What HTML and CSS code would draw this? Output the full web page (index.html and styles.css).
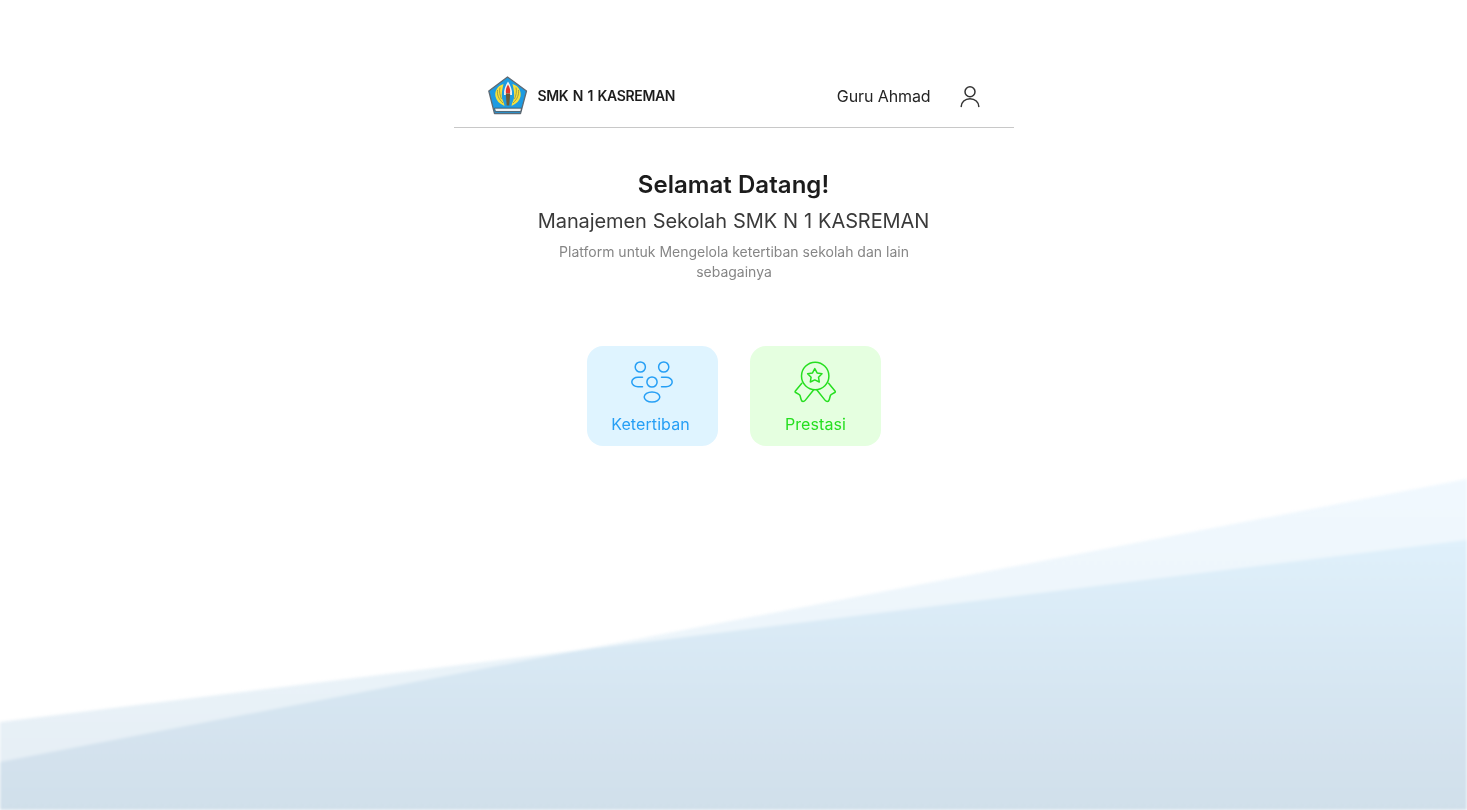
FILE: index.html
```html
<!DOCTYPE html>
<html lang="id">
<head>
<meta charset="utf-8">
<title>SMK N 1 KASREMAN</title>
<link rel="stylesheet" href="styles.css">
</head>
<body>
<svg class="backdrop" viewBox="0 0 1467 810" preserveAspectRatio="none" aria-hidden="true">
  <defs>
    <linearGradient id="waveA" gradientUnits="userSpaceOnUse" x1="0" y1="540" x2="0" y2="810">
      <stop offset="0" stop-color="#eef8fd"/>
      <stop offset="1" stop-color="#e4ecf3"/>
    </linearGradient>
    <linearGradient id="waveB" gradientUnits="userSpaceOnUse" x1="0" y1="479" x2="0" y2="810">
      <stop offset="0" stop-color="#f0f8fe"/>
      <stop offset="1" stop-color="#e9f1f6"/>
    </linearGradient>
  </defs>
  <polygon class="wave" points="0,762 1467,479 1467,810 0,810" fill="url(#waveB)"/>
  <polygon class="wave" points="0,722 1467,540 1467,810 0,810" fill="url(#waveA)"/>
</svg>

<main class="panel">
  <header class="topbar">
    <div class="brand">
      <svg class="logo" viewBox="0 0 40 40" aria-hidden="true">
        <path d="M19.500 1 38.500 15 32.500 37.500 6.500 37.500 .8 15Z" fill="#1d9be2" stroke="#5f6a74" stroke-width="1.300" stroke-linejoin="round"/>
        <path d="M15.500 8C9 10 6.500 15.500 7.500 20.500c.8 4 3.800 7.200 9 9.500-.2-3-2-5-2.500-8-.6-4 .2-8.500 1.500-14Z" fill="#f5e13c"/>
        <path d="M24.500 8c6.500 2 9 7.500 8 12.500-.8 4-3.800 7.200-9 9.500.2-3 2-5 2.500-8 .6-4-.2-8.500-1.500-14Z" fill="#f5e13c"/>
        <path d="M9.500 14c-.6 4.500 1 9 5.500 13M12 11.500c-1 4 0 8 1.500 11.500M30.500 14c.6 4.500-1 9-5.500 13M28 11.500c1 4 0 8-1.500 11.500" fill="none" stroke="#7f8240" stroke-width=".7"/>
        <path d="M16 19c-.5-5 1.500-9.500 4-13.500 2.500 4 4.500 8.500 4 13.500Z" fill="#f0f3f4"/>
        <path d="M20 8.500c1.800 3 2.600 5.500 2 9h-4c-.6-3.500.2-6 2-9Z" fill="#e2342c"/>
        <path d="M17.800 17.500h4.400l-.9 12h-2.600Z" fill="#6a5a36"/>
        <path d="M6.500 32.200h27l-.8 3.300H7.500Z" fill="#eef3f5" stroke="#39424b" stroke-width=".7"/>
      </svg>
      <span class="brand-name">SMK N 1 KASREMAN</span>
    </div>
    <div class="account">
      <span class="account-name">Guru Ahmad</span>
      <svg class="account-icon" viewBox="0 0 20 24" fill="none" aria-hidden="true">
        <circle cx="10" cy="7.700" r="5"/>
        <path d="M1.200 22.500c0-4.200 3.800-7.800 8.800-7.800s8.800 3.600 8.800 7.800"/>
      </svg>
    </div>
  </header>

  <section class="intro">
    <h1 class="title">Selamat Datang!</h1>
    <p class="subtitle">Manajemen Sekolah SMK N 1 KASREMAN</p>
    <p class="desc">Platform untuk Mengelola ketertiban sekolah dan lain sebagainya</p>
  </section>

  <nav class="menu">
    <a class="tile tile-blue" href="#">
      <svg class="tile-icon" viewBox="0 0 48 48" fill="none" aria-hidden="true">
        <circle cx="12.300" cy="9" r="5.100"/>
        <circle cx="35.700" cy="9" r="5.100"/>
        <circle cx="24" cy="24" r="5.100"/>
        <ellipse cx="24" cy="39" rx="7.800" ry="5.100"/>
        <path d="M14.500 19.300H10c-3.400 0-6.200 2-6.200 4.700s2.800 4.700 6.200 4.700h4.500"/>
        <path d="M33.500 19.300H38c3.400 0 6.200 2 6.200 4.700s-2.800 4.700-6.200 4.700h-4.500"/>
      </svg>
      <span class="tile-label">Ketertiban</span>
    </a>
    <a class="tile tile-green" href="#">
      <svg class="tile-icon" viewBox="0 0 48 48" fill="none" aria-hidden="true">
        <circle cx="24.200" cy="18" r="13.700"/>
        <path d="M23.800 10.600 26.100 14.900 31 15.700 27.500 19.200 28.300 24 23.800 21.900 19.300 24 20.100 19.200 16.600 15.700 21.500 14.900Z"/>
        <path d="M10.800 25.300 4.400 32.900Q3.600 33.900 4.700 34.500L7.900 36.300Q8.800 36.800 9.100 37.800L10.100 41.500Q10.700 43.600 12.100 43.500 13.300 43.500 14.200 42.400L22.500 32"/>
        <path d="M37.600 25.300 44 32.900Q44.800 33.900 43.700 34.500L40.500 36.300Q39.600 36.800 39.300 37.800L38.300 41.500Q37.700 43.600 36.300 43.500 35.100 43.500 34.200 42.400L25.900 32"/>
      </svg>
      <span class="tile-label">Prestasi</span>
    </a>
  </nav>
</main>
</body>
</html>
```

FILE: styles.css
```css
* { box-sizing: border-box; }

html, body {
  margin: 0;
  height: 100%;
  overflow: hidden;
  background: #fff;
}

body {
  font-family: Inter, "Liberation Sans", sans-serif;
  color: #1c1c1c;
}

.backdrop {
  position: fixed;
  inset: 0;
  width: 100%;
  height: 100%;
  filter: blur(1.5px);
}

.wave {
  mix-blend-mode: multiply;
}

.panel {
  position: relative;
  width: 560px;
  margin: 0 auto;
  padding-top: 76px;
}

.topbar {
  display: flex;
  align-items: center;
  justify-content: space-between;
  height: 52px;
  padding: 0 34px 12px;
  border-bottom: 1px solid #c8c8c8;
}

.brand {
  display: flex;
  align-items: center;
  gap: 10px;
}

.logo {
  width: 40px;
  height: 40px;
  display: block;
}

.brand-name {
  font-size: 14px;
  font-weight: 600;
  letter-spacing: -.35px;
  word-spacing: 1.3px;
  color: #1c1c1c;
}

.account {
  display: flex;
  align-items: center;
  gap: 29px;
}

.account-name {
  font-size: 16px;
  letter-spacing: -.1px;
  color: #242424;
}

.account-icon {
  width: 20px;
  height: 24px;
  display: block;
  stroke: #333;
  stroke-width: 1.500;
  stroke-linecap: round;
  overflow: visible;
}

.intro {
  margin-top: 42px;
  display: flex;
  flex-direction: column;
  align-items: center;
  text-align: center;
}

.title {
  margin: 0;
  font-size: 24px;
  line-height: 29px;
  font-weight: 600;
  letter-spacing: .05px;
  color: #1c1c1c;
}

.subtitle {
  margin: 10px 0 0;
  font-size: 20px;
  line-height: 24px;
  letter-spacing: -.1px;
  word-spacing: .5px;
  color: #3a3a3a;
}

.desc {
  margin: 9px 0 0 1px;
  width: 380px;
  font-size: 14px;
  line-height: 20px;
  color: #868686;
}

.menu {
  margin-top: 64px;
  display: flex;
  justify-content: center;
  gap: 32px;
}

.tile {
  width: 131px;
  height: 100px;
  padding-top: 12px;
  border-radius: 16px;
  display: flex;
  flex-direction: column;
  align-items: center;
  gap: 9px;
  font-size: 16px;
  line-height: 19px;
  text-decoration: none;
}

.tile-label {
  letter-spacing: .1px;
}

.tile-icon {
  width: 48px;
  height: 48px;
  display: block;
  stroke: currentColor;
  stroke-width: 1.500;
  stroke-linecap: round;
  stroke-linejoin: round;
}

.tile-blue {
  background: #dff4ff;
  color: #269ff5;
}

.tile-blue .tile-label {
  padding-right: 3px;
}

.tile-green {
  background: #e5ffe0;
  color: #26df20;
}

.tile-green .tile-label {
  padding-left: 1px;
}
```
